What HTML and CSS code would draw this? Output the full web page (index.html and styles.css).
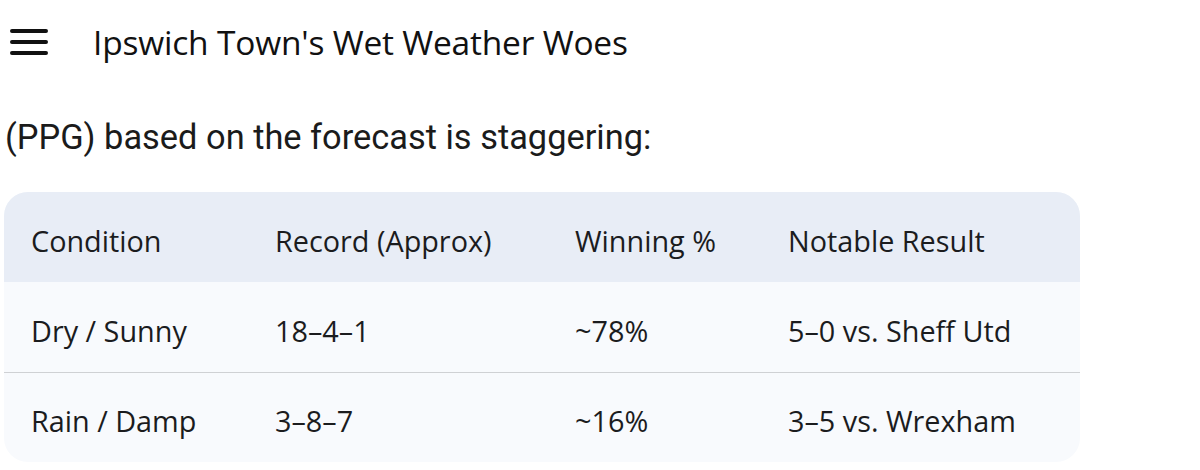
FILE: index.html
```html
<!DOCTYPE html>
<html>
<head>
<meta charset="utf-8">
<link rel="stylesheet" href="styles.css">
</head>
<body>
<header class="topbar">
  <svg class="menu" width="38" height="26" viewBox="0 0 38 26">
    <path d="M2 2H36M2 13H36M2 24H36" stroke="#111" stroke-width="4" stroke-linecap="round" fill="none"/>
  </svg>
  <h1 class="title">Ipswich Town's Wet Weather Woes</h1>
</header>
<p class="lead">(PPG) based on the forecast is staggering:</p>
<div class="table-wrap">
  <table class="stats">
    <thead>
      <tr><th class="c1">Condition</th><th class="c2">Record (Approx)</th><th class="c3">Winning %</th><th class="c4">Notable Result</th></tr>
    </thead>
    <tbody>
      <tr><td>Dry / Sunny</td><td>18–4–1</td><td>~78%</td><td>5–0 vs. Sheff Utd</td></tr>
      <tr><td>Rain / Damp</td><td>3–8–7</td><td>~16%</td><td>3–5 vs. Wrexham</td></tr>
    </tbody>
  </table>
</div>
</body>
</html>
```
FILE: styles.css
```css
html, body { margin: 0; padding: 0; background: #ffffff; }
body { width: 1200px; height: 470px; overflow: hidden; color: #1b1b1b; }
.topbar {
  display: flex;
  align-items: center;
  height: 84px;
  padding-left: 10px;
}
.menu { display: block; }
.title {
  margin: 0 0 0 45px;
  font-family: "Open Sans", sans-serif;
  font-weight: 400;
  font-size: 33.5px;
  letter-spacing: -0.2px;
  color: #111;
}
.lead {
  margin: 33px 0 0 5px;
  font-family: "Roboto", sans-serif;
  font-size: 34.4px;
  line-height: 40px;
  color: #1b1b1b;
}
.table-wrap {
  margin: 35px 0 0 4px;
  width: 1076px;
  border-radius: 24px;
  overflow: hidden;
  background: #f8fafd;
}
.stats {
  width: 100%;
  table-layout: fixed;
  border-collapse: collapse;
  font-family: "Open Sans", sans-serif;
  font-size: 28.8px;
  color: #1b1c1e;
}
.stats th, .stats td {
  text-align: left;
  font-weight: 400;
  padding: 7px 0 0 27px;
  white-space: nowrap;
}
.stats thead tr { background: #e8edf6; height: 90px; }
.stats tbody tr { height: 90px; }
.stats tbody tr + tr td { border-top: 1px solid #cfd1d4; }
.c1 { width: 217px; }
.c2 { width: 273px; }
.c3 { width: 186px; }
```
